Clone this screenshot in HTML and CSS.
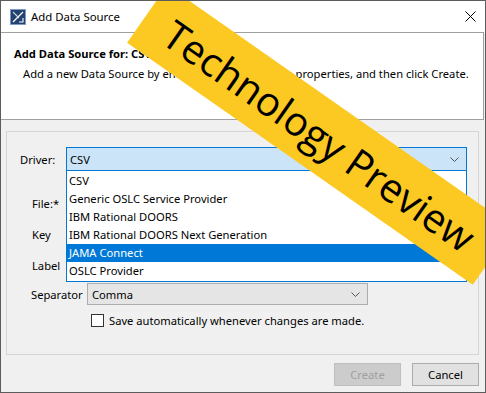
FILE: index.html
```html
<!DOCTYPE html>
<html lang="en">

<head>
    <meta charset="UTF-8">
    <meta name="viewport" content="width=device-width, initial-scale=1.0">
    <title>Add Data Source</title>
    <link rel="stylesheet" href="styles.css">
</head>

<body>
    <div class="window">
        <!-- Title bar -->
        <div class="titlebar">
            <svg class="app-icon" width="16" height="16" viewBox="0 0 16 16">
                <rect x="0.5" y="0.5" width="15" height="15" fill="#24426f" stroke="#7d9bc4"/>
                <path d="M3 13 L13 3" stroke="#ffffff" stroke-width="1.3"/>
                <path d="M3 3 L9 9" stroke="#c9d6ea" stroke-width="1.1"/>
                <path d="M9 13 L13 13 L13 9" fill="none" stroke="#ffffff" stroke-width="1.1"/>
            </svg>
            <span class="title">Add Data Source</span>
            <svg class="close-icon" width="11" height="11" viewBox="0 0 11 11">
                <path d="M0.5 0.5 L10.5 10.5 M10.5 0.5 L0.5 10.5" stroke="#000" stroke-width="1"/>
            </svg>
        </div>

        <!-- Description panel -->
        <div class="header">
            <h1>Add Data Source for: CSV</h1>
            <p>Add a new Data Source by entering the appropriate properties, and then click Create.</p>
        </div>

        <div class="content">
            <div class="group">
                <div class="row driver-row">
                    <label class="driver-label">Driver:</label>
                    <div class="combo combo-open">
                        <span>CSV</span>
                        <svg class="chevron" width="9" height="5" viewBox="0 0 9 5">
                            <path d="M0.5 0.5 L4.5 4.5 L8.5 0.5" fill="none" stroke="#555" stroke-width="1"/>
                        </svg>
                    </div>
                </div>
                <div class="row field-row"><label>File:*</label></div>
                <div class="row field-row"><label>Key</label></div>
                <div class="row field-row"><label>Label</label></div>
                <div class="row sep-row">
                    <label class="sep-label">Separator</label>
                    <div class="combo combo-closed">
                        <span>Comma</span>
                        <svg class="chevron" width="9" height="5" viewBox="0 0 9 5">
                            <path d="M0.5 0.5 L4.5 4.5 L8.5 0.5" fill="none" stroke="#555" stroke-width="1"/>
                        </svg>
                    </div>
                </div>
                <div class="row check-row">
                    <span class="checkbox"></span>
                    <span>Save automatically whenever changes are made.</span>
                </div>

                <!-- Open driver list -->
                <ul class="dropdown">
                    <li>CSV</li>
                    <li>Generic OSLC Service Provider</li>
                    <li>IBM Rational DOORS</li>
                    <li>IBM Rational DOORS Next Generation</li>
                    <li class="selected">JAMA Connect</li>
                    <li>OSLC Provider</li>
                </ul>
            </div>

            <div class="buttons">
                <button class="btn btn-disabled" disabled>Create</button>
                <button class="btn">Cancel</button>
            </div>
        </div>

        <div class="banner">Technology Preview</div>
    </div>
</body>

</html>
```

FILE: styles.css
```css
/* General Reset */
* {
    margin: 0;
    padding: 0;
    box-sizing: border-box;
}

body {
    font-family: 'Noto Sans', 'Open Sans', sans-serif;
    font-size: 11.2px;
    color: #000;
    background: #ffffff;
}

/* Dialog window */
.window {
    position: relative;
    width: 486px;
    height: 393px;
    border: 1px solid #5c5c5c;
    background: #f0f0f0;
    overflow: hidden;
}

.titlebar {
    height: 31px;
    background: #ffffff;
    display: flex;
    align-items: center;
    padding-left: 9px;
    padding-right: 9px;
}

.app-icon {
    margin-right: 5px;
}

.title {
    flex: 1;
    font-size: 11.4px;
}

/* Description panel */
.header {
    height: 88px;
    margin-right: 1px;
    background: #ffffff;
    border: 1px solid #a0a0a0;
    border-left: none;
    padding: 13px 0 0 13px;
}

.header h1 {
    font-size: 11.2px;
    font-weight: 700;
    line-height: 16px;
}

.header p {
    margin-top: 4px;
    padding-left: 9px;
    line-height: 16px;
}

/* Content area */
.content {
    padding: 11px 6px 0 5px;
}

.group {
    position: relative;
    height: 224px;
    border: 1px solid #d5d5d5;
    padding-top: 15px;
}

.row {
    display: flex;
    align-items: center;
}

.driver-row {
    height: 24px;
    padding-left: 13px;
}

.driver-label {
    width: 46px;
}

.field-row {
    height: 31px;
    padding-left: 25px;
}

.driver-row + .field-row {
    margin-top: 17px;
}

.sep-row {
    height: 22px;
    margin-top: 2px;
    padding-left: 24px;
}

.sep-label {
    width: 56px;
}

.combo {
    display: flex;
    align-items: center;
    justify-content: space-between;
    padding: 0 7px 0 3px;
}

.combo-open {
    width: 401px;
    height: 24px;
    background: #cce4f7;
    border: 1px solid #0078d7;
}

.combo-closed {
    width: 281px;
    height: 22px;
    background: #e5e5e5;
    border: 1px solid #adadad;
    padding-left: 4px;
}

.check-row {
    height: 13px;
    margin-top: 9px;
    padding-left: 84px;
}

.checkbox {
    width: 13px;
    height: 13px;
    border: 1px solid #333;
    background: #ffffff;
    margin-right: 5px;
}

/* Open list */
.dropdown {
    position: absolute;
    left: 59px;
    top: 39px;
    width: 401px;
    list-style: none;
    background: #ffffff;
    border: 1px solid #0078d7;
    border-top: none;
    padding: 1px 0;
}

.dropdown li {
    height: 18px;
    line-height: 18px;
    padding-left: 2px;
}

.dropdown li.selected {
    background: #0078d7;
    color: #ffffff;
}

/* Buttons */
.buttons {
    display: flex;
    justify-content: flex-end;
    gap: 11px;
    margin-top: 8px;
}

.btn {
    width: 67px;
    height: 23px;
    font-family: inherit;
    font-size: 11.2px;
    background: #e1e1e1;
    border: 1px solid #adadad;
    color: #000;
}

.btn-disabled {
    background: #cccccc;
    border-color: #bfbfbf;
    color: #a0a0a0;
}

/* Diagonal ribbon */
.banner {
    position: absolute;
    left: 108px;
    top: 99px;
    width: 422px;
    height: 70px;
    background: #fcc822;
    transform: rotate(35deg);
    display: flex;
    align-items: center;
    justify-content: center;
    font-family: 'Open Sans', sans-serif;
    font-size: 40px;
    color: #000;
}
```
